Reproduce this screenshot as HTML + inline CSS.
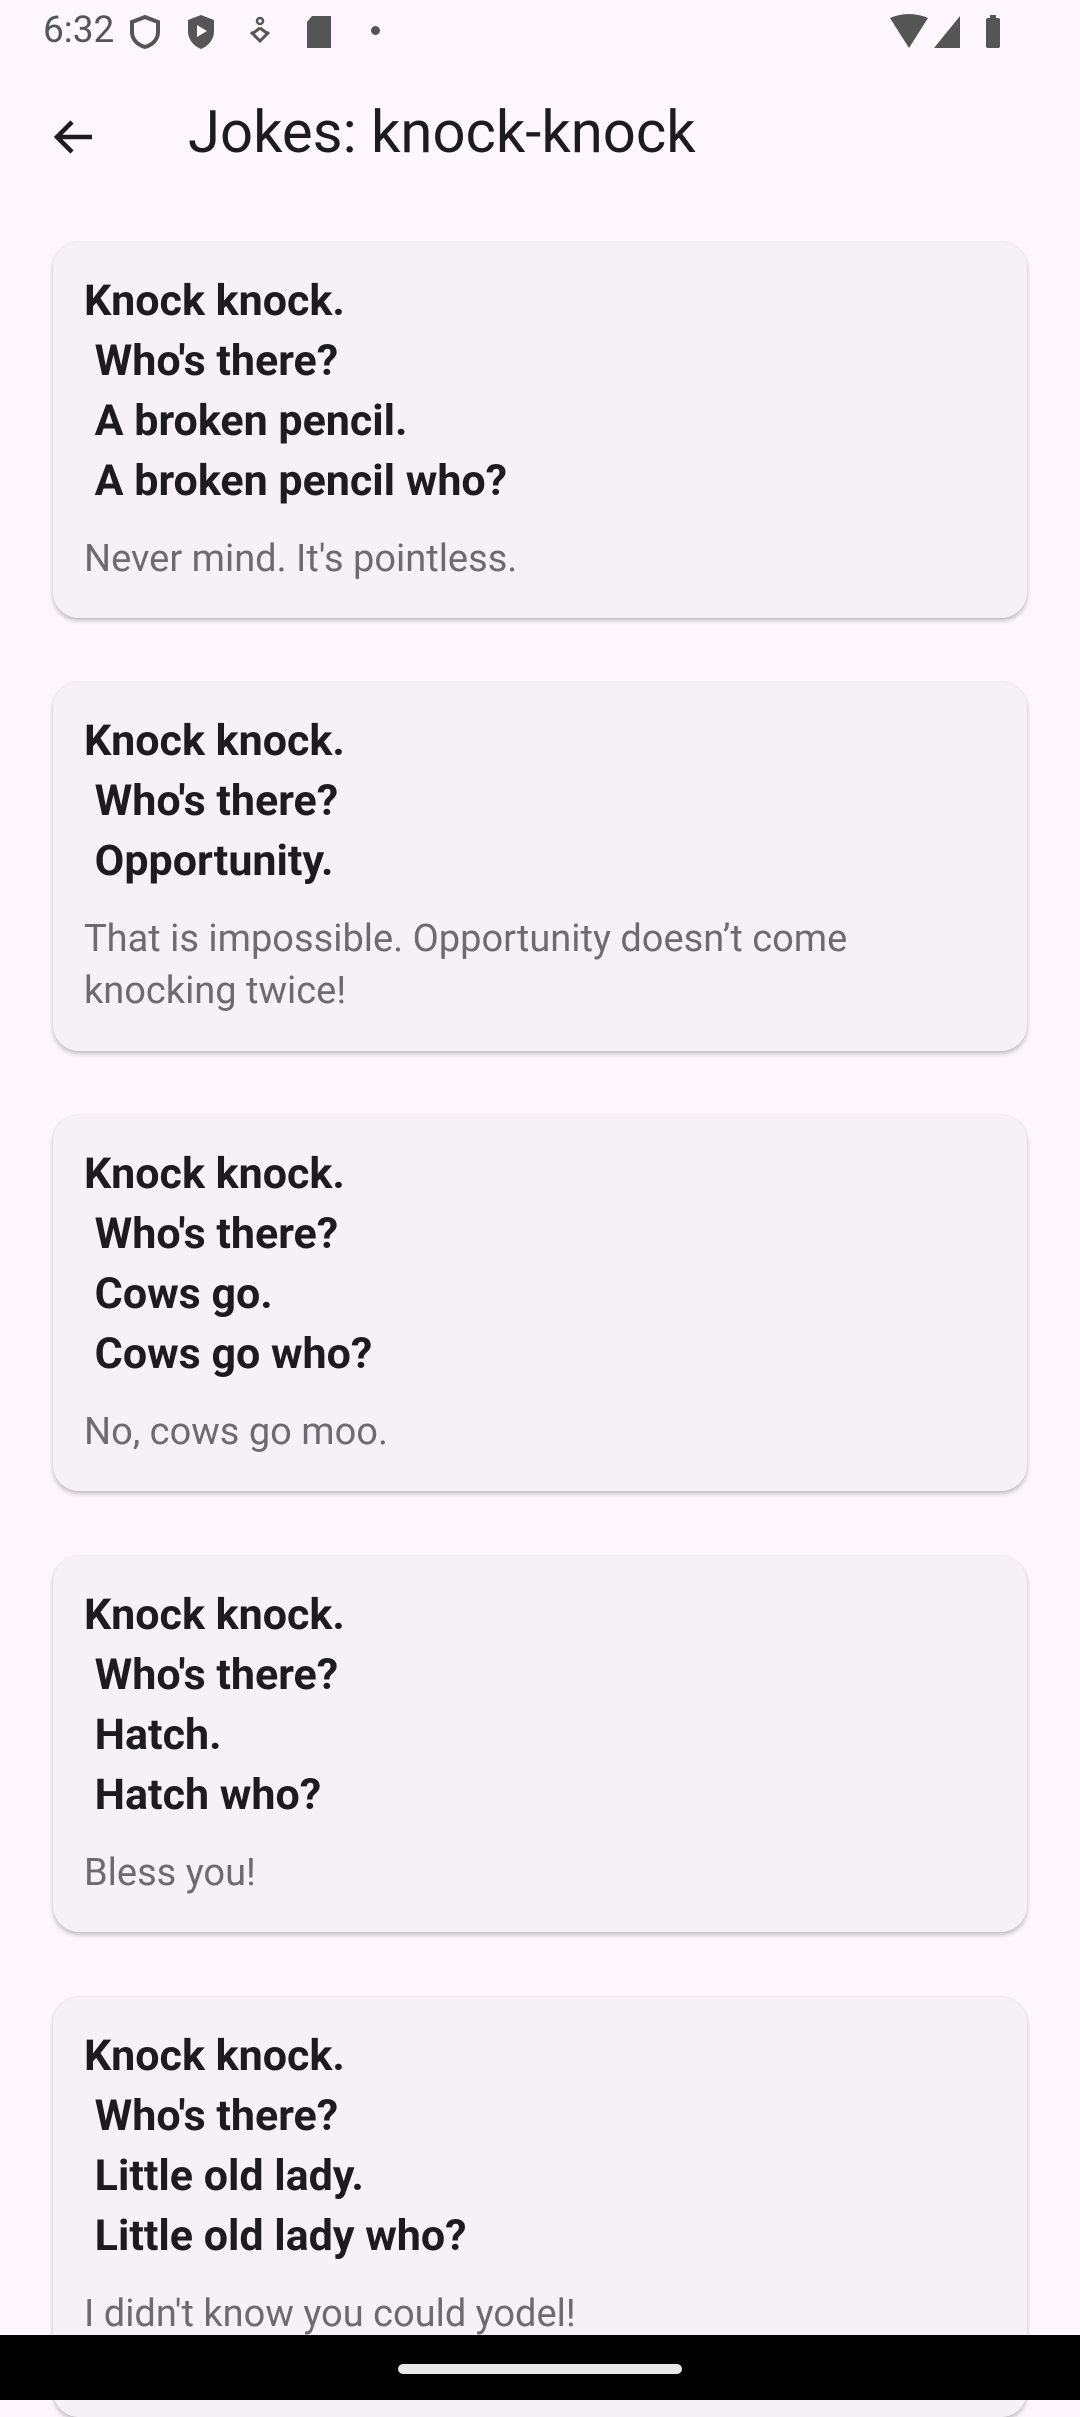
<!DOCTYPE html>
<html><head><meta charset="utf-8">
<style>
*{margin:0;padding:0;box-sizing:border-box}
body{width:1080px;height:2400px;background:#fdf7fd;font-family:"Roboto","Liberation Sans",sans-serif;position:relative;overflow:hidden}
.sb{position:absolute;top:0;left:0;width:1080px;height:64px}
.time{position:absolute;left:43px;top:9px;font-size:37px;color:#555}
.title{position:absolute;left:188px;top:98px;font-size:58px;color:#1d1b20;line-height:70px}
.card{position:absolute;left:53px;width:974px;background:#f5f1f7;border-radius:26px;box-shadow:0 3px 5px rgba(0,0,0,.22),0 0 2px rgba(0,0,0,.08);padding:29px 31px 31px 31px;overflow:hidden}
.b{font-weight:bold;font-size:43px;line-height:60px;color:#1d1b20;white-space:pre}
.p{font-size:38px;line-height:52px;color:#6f6a72;margin-top:22px}
.nav{position:absolute;left:0;top:2335px;width:1080px;height:65px;background:#000}
.pill{position:absolute;left:398px;top:2364px;width:284px;height:10px;border-radius:5px;background:#e8e8e8}
</style></head><body>
<div class="sb">
<div class="time">6:32</div>
<svg style="position:absolute;left:128px;top:14px" width="34" height="36" viewBox="0 0 34 36"><path d="M17 3 L30 8 V18 C30 26 24 31 17 33 C10 31 4 26 4 18 V8 Z" fill="none" stroke="#555" stroke-width="4"/></svg>
<svg style="position:absolute;left:186px;top:13px" width="30" height="38" viewBox="0 0 30 38"><path d="M15 2 L28 7 V18 C28 27 22 33 15 36 C8 33 2 27 2 18 V7 Z" fill="#555"/><path d="M11 12 L21 18 L11 24Z" fill="#fdf7fd"/></svg>
<svg style="position:absolute;left:248px;top:16px" width="24" height="32" viewBox="0 0 24 32"><circle cx="12" cy="5" r="3" fill="none" stroke="#555" stroke-width="2.5"/><path d="M3 16 L12 25 L21 16 M12 12 L4 18 M12 12 L20 18" fill="none" stroke="#555" stroke-width="3"/></svg>
<svg style="position:absolute;left:304px;top:14px" width="30" height="36" viewBox="0 0 30 36"><path d="M8 2 H27 V34 H3 V8 Z" fill="#555"/></svg>
<div style="position:absolute;left:371px;top:26px;width:9px;height:9px;border-radius:50%;background:#555"></div>
<svg style="position:absolute;left:890px;top:14px" width="112" height="36" viewBox="0 0 112 36"><path d="M0 4 Q19 -4 38 4 L19 34 Z" fill="#555"/><path d="M70 2 V34 H44 Z" fill="#555"/><rect x="96" y="4" width="14" height="30" rx="2" fill="#555"/><rect x="100" y="1" width="6" height="4" fill="#555"/></svg>
</div>
<svg style="position:absolute;left:50px;top:114px" width="46" height="46" viewBox="0 0 46 46"><path d="M42 23 H8 M22 8 L7 23 L22 38" fill="none" stroke="#1d1b20" stroke-width="4.5"/></svg>
<div class="title">Jokes: knock-knock</div>

<div class="card" style="top:242px;height:376px"><div class="b">Knock knock.
 Who's there?
 A broken pencil.
 A broken pencil who?</div><div class="p">Never mind. It's pointless.</div></div>

<div class="card" style="top:682px;height:369px"><div class="b">Knock knock.
 Who's there?
 Opportunity.</div><div class="p">That is impossible. Opportunity doesn’t come<br>knocking twice!</div></div>

<div class="card" style="top:1115px;height:376px"><div class="b">Knock knock.
 Who's there?
 Cows go.
 Cows go who?</div><div class="p">No, cows go moo.</div></div>

<div class="card" style="top:1556px;height:376px"><div class="b">Knock knock.
 Who's there?
 Hatch.
 Hatch who?</div><div class="p">Bless you!</div></div>

<div class="card" style="top:1997px;height:420px"><div class="b">Knock knock.
 Who's there?
 Little old lady.
 Little old lady who?</div><div class="p">I didn't know you could yodel!</div></div>

<div class="nav"></div><div class="pill"></div>
</body></html>
